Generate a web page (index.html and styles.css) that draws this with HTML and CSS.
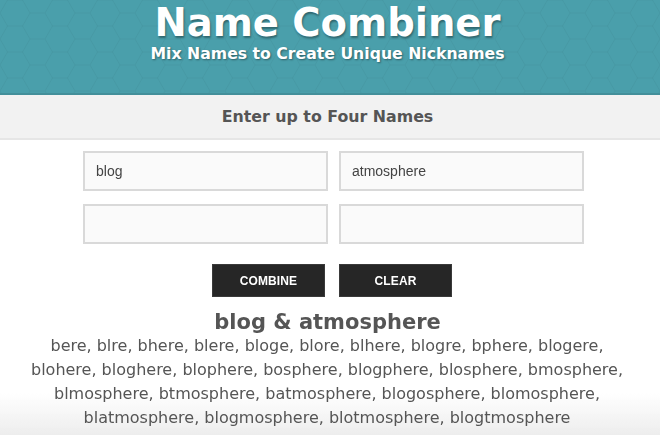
FILE: index.html
```html
<!DOCTYPE html>
<html lang="en">
<head>
<meta charset="utf-8">
<title>Name Combiner</title>
<link rel="stylesheet" href="styles.css">
</head>
<body>
<header class="hero">
  <h1 class="hero-title">Name Combiner</h1>
  <p class="hero-sub">Mix Names to Create Unique Nicknames</p>
</header>
<div class="band">
  <h2 class="band-title">Enter up to Four Names</h2>
</div>
<main class="main">
  <form class="names">
    <input class="name-input" type="text" value="blog">
    <input class="name-input" type="text" value="atmosphere">
    <input class="name-input" type="text" value="">
    <input class="name-input" type="text" value="">
  </form>
  <div class="actions">
    <button class="btn" type="button">COMBINE</button>
    <button class="btn" type="button">CLEAR</button>
  </div>
  <section class="results">
    <h3 class="results-title">blog &amp; atmosphere</h3>
    <p class="results-list">bere, blre, bhere, blere, bloge, blore, blhere, blogre, bphere, blogere, blohere, bloghere, blophere, bosphere, blogphere, blosphere, bmosphere, blmosphere, btmosphere, batmosphere, blogosphere, blomosphere, blatmosphere, blogmosphere, blotmosphere, blogtmosphere</p>
  </section>
</main>
</body>
</html>
```
FILE: styles.css
```css
* { box-sizing: border-box; }
html { margin: 0; padding: 0; background: #fff; }
body {
  margin: 0;
  padding: 0;
  font-family: "DejaVu Sans", Verdana, sans-serif;
  color: #555;
}
body::after {
  content: "";
  position: fixed;
  left: 0; right: 0; bottom: 0;
  height: 42px;
  background: linear-gradient(to bottom, rgba(240,240,240,0), #ededed);
  z-index: -1;
  pointer-events: none;
}
.hero {
  background-color: #4a9fab;
  background-image: url("data:image/svg+xml,%3Csvg xmlns='http://www.w3.org/2000/svg' width='45' height='26'%3E%3Cpath d='M0 13L7.5 0H22.5L30 13L22.5 26H7.5ZM30 13H45' fill='none' stroke='%23000' stroke-opacity='0.035' stroke-width='1'/%3E%3C/svg%3E");
  border-bottom: 2px solid #438f9a;
  height: 95px;
  text-align: center;
  padding-top: 3px;
}
.hero-title {
  margin: 0;
  padding-right: 5px;
  font-size: 38.5px;
  line-height: 40px;
  font-weight: bold;
  color: #fff;
  text-shadow: 1px 2px 2px rgba(0,0,0,0.35);
}
.hero-sub {
  margin: 1px 0 0;
  padding-right: 5px;
  font-size: 15.7px;
  line-height: 20px;
  font-weight: bold;
  color: #fff;
  text-shadow: 1px 1px 2px rgba(0,0,0,0.4);
}
.band {
  background: #f2f2f2;
  border-bottom: 2px solid #e6e6e6;
  height: 45px;
  display: flex;
  align-items: center;
  justify-content: center;
}
.band-title {
  margin: 0;
  font-size: 15.8px;
  font-weight: bold;
  color: #555;
  padding-right: 5px;
}
.main {
  padding-top: 11px;
  text-align: center;
}
.names {
  width: 500px;
  margin: 0 0 0 83px;
  display: grid;
  grid-template-columns: 245px 245px;
  column-gap: 11px;
  row-gap: 13px;
}
.name-input {
  height: 40px;
  border: 2px solid #d9d9d9;
  background: #fafafa;
  padding: 0 11px;
  font-family: "Liberation Sans", Arial, sans-serif;
  font-size: 14px;
  color: #444;
  outline: none;
}
.actions {
  display: flex;
  justify-content: center;
  gap: 14px;
  margin-top: 20px;
  padding-left: 4px;
}
.btn {
  width: 113px;
  height: 33px;
  background: #262626;
  border: 1px solid #3a3a3a;
  color: #fff;
  font-family: "Liberation Sans", Arial, sans-serif;
  font-weight: bold;
  font-size: 12px;
  letter-spacing: 0.1px;
  padding: 0;
}
.results { margin-top: 13px; }
.results-title {
  margin: 0;
  font-size: 21px;
  line-height: 24px;
  font-weight: bold;
  color: #555;
  padding-right: 5px;
}
.results-list {
  margin: 0 0 0 22px;
  width: 610px;
  font-size: 16px;
  line-height: 24px;
  color: #555;
}
```
